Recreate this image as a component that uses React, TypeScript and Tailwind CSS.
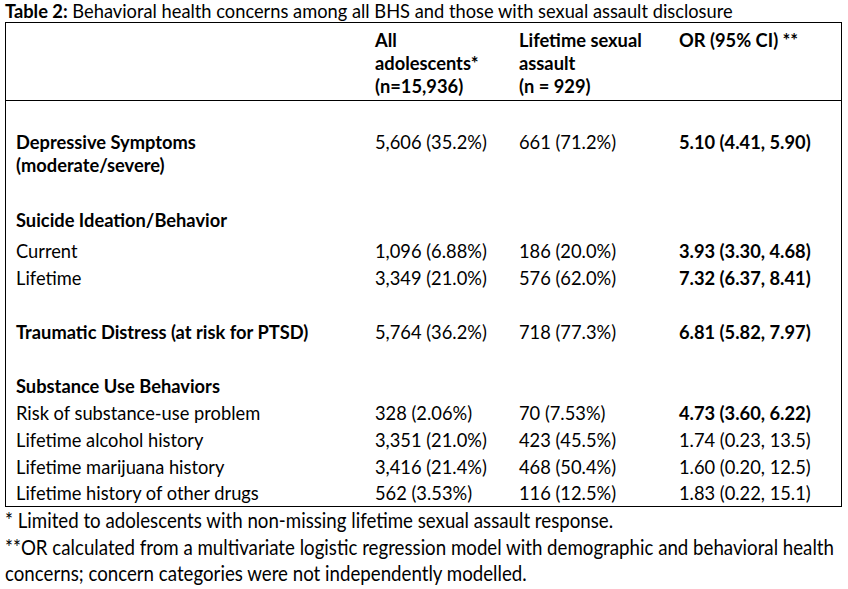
import React from "react";

const font = { fontFamily: "Lato, 'Open Sans', sans-serif" };

function Row({
  a,
  b,
  c,
  d,
  bold,
  boldD,
  cls,
}: {
  a: React.ReactNode;
  b?: string;
  c?: string;
  d?: string;
  bold?: boolean;
  boldD?: boolean;
  cls: string;
}) {
  return (
    <div className={`grid grid-cols-[369px_144px_160px_1fr] whitespace-nowrap ${cls}`}>
      <div className={`pl-[10px] ${bold ? "font-bold" : ""}`}>{a}</div>
      <div>{b}</div>
      <div>{c}</div>
      <div className={boldD ? "font-bold" : ""}>{d}</div>
    </div>
  );
}

export default function App() {
  return (
    <div className="w-[848px] h-[589px] bg-white text-black overflow-hidden text-[18.3px]" style={font}>
      <div className="pl-[5px] h-[22px] leading-[22px] whitespace-nowrap">
        <span className="font-bold">Table 2:</span> Behavioral health concerns among all BHS and those with sexual assault disclosure
      </div>
      <div className="ml-[5px] w-[837px] border border-black">
        <div className="grid grid-cols-[369px_144px_160px_1fr] whitespace-nowrap pt-[6px] pb-[2px] border-b border-black leading-[23px] font-bold">
          <div></div>
          <div>
            All
            <br />
            adolescents*
            <br />
            (n=15,936)
          </div>
          <div>
            Lifetime sexual
            <br />
            assault
            <br />
            (n = 929)
          </div>
          <div>OR (95% CI) **</div>
        </div>

        <div className="grid grid-cols-[369px_144px_160px_1fr] whitespace-nowrap mt-[30px] leading-[23px]">
          <div className="pl-[10px] font-bold">
            Depressive Symptoms
            <br />
            (moderate/severe)
          </div>
          <div>5,606 (35.2%)</div>
          <div>661 (71.2%)</div>
          <div className="font-bold">5.10 (4.41, 5.90)</div>
        </div>

        <Row cls="mt-[30px] h-[27px] leading-[27px]" a="Suicide Ideation/Behavior" bold />
        <Row cls="mt-[4px] h-[27px] leading-[27px]" a="Current" b="1,096 (6.88%)" c="186 (20.0%)" d="3.93 (3.30, 4.68)" boldD />
        <Row cls="h-[27px] leading-[27px]" a="Lifetime" b="3,349 (21.0%)" c="576 (62.0%)" d="7.32 (6.37, 8.41)" boldD />

        <Row
          cls="mt-[27px] h-[27px] leading-[27px]"
          a="Traumatic Distress (at risk for PTSD)"
          bold
          b="5,764 (36.2%)"
          c="718 (77.3%)"
          d="6.81 (5.82, 7.97)"
          boldD
        />

        <Row cls="mt-[27px] h-[27px] leading-[27px]" a="Substance Use Behaviors" bold />
        <Row cls="h-[27px] leading-[27px]" a="Risk of substance-use problem" b="328 (2.06%)" c="70 (7.53%)" d="4.73 (3.60, 6.22)" boldD />
        <Row cls="h-[27px] leading-[27px]" a="Lifetime alcohol history" b="3,351 (21.0%)" c="423 (45.5%)" d="1.74 (0.23, 13.5)" />
        <Row cls="h-[27px] leading-[27px]" a="Lifetime marijuana history" b="3,416 (21.4%)" c="468 (50.4%)" d="1.60 (0.20, 12.5)" />
        <Row cls="h-[25px] leading-[25px]" a="Lifetime history of other drugs" b="562 (3.53%)" c="116 (12.5%)" d="1.83 (0.22, 15.1)" />
      </div>
      <div className="pl-[5px] leading-[26.5px] text-[21px] whitespace-nowrap">
        <div className="origin-left scale-x-[0.89]">* Limited to adolescents with non-missing lifetime sexual assault response.</div>
        <div className="origin-left scale-x-[0.89]">
          **OR calculated from a multivariate logistic regression model with demographic and behavioral health
        </div>
        <div className="origin-left scale-x-[0.89]">concerns; concern categories were not independently modelled.</div>
      </div>
    </div>
  );
}
